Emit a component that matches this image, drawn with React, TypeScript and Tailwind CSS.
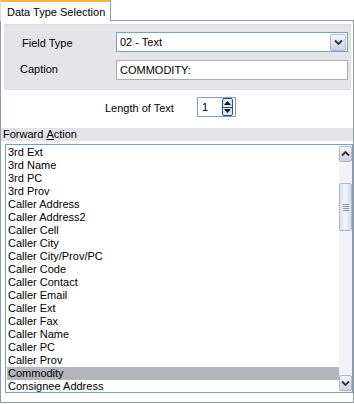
import React from 'react';

const items = [
  '3rd Ext',
  '3rd Name',
  '3rd PC',
  '3rd Prov',
  'Caller Address',
  'Caller Address2',
  'Caller Cell',
  'Caller City',
  'Caller City/Prov/PC',
  'Caller Code',
  'Caller Contact',
  'Caller Email',
  'Caller Ext',
  'Caller Fax',
  'Caller Name',
  'Caller PC',
  'Caller Prov',
  'Commodity',
  'Consignee Address',
];

const Chevron = ({ up = false }: { up?: boolean }) => (
  <svg width="9" height="6" viewBox="0 0 9 6" className={up ? 'rotate-180' : ''}>
    <path d="M1 1.5 L4.5 5 L8 1.5" fill="none" stroke="#333" strokeWidth="1.8" />
  </svg>
);

const ScrollButton = ({ up = false }: { up?: boolean }) => (
  <div className="flex h-[16px] w-[13px] items-center justify-center rounded-[2px] border border-[#b0b6cc] bg-gradient-to-b from-[#f6f7fc] to-[#cdd1e4]">
    <Chevron up={up} />
  </div>
);

const App = () => {
  return (
    <div className="h-[404px] w-[354px] overflow-hidden bg-white font-['Liberation_Sans',Arial,sans-serif] text-[11px] leading-[13px] text-black">
      {/* tab strip */}
      <div className="flex h-[21px]">
        <div className="flex w-[111px] flex-col border-l border-r border-[#919b9c] border-l-[#d8dde0]">
          <div className="h-[2px] bg-[#f7b23c]" />
          <div className="flex flex-1 items-center pl-[6px] pt-[1px]">Data Type Selection</div>
        </div>
        <div className="flex-1 border-b border-[#919b9c]" />
      </div>

      {/* panel */}
      <div className="flex h-[382px] flex-col border-b border-l border-r border-[#919b9c]">
        <div className="ml-[3px] mr-[2px] mt-[3px] flex h-[66px] flex-col gap-[8px] border border-dotted border-[#d6d6dc] bg-[#e4e4e9] pt-[7px]">
          <div className="flex h-[20px] items-center">
            <div className="w-[111px] pl-[17px] pt-[2px]">Field Type</div>
            <div className="flex h-[20px] w-[232px] items-center border border-[#7f9db9] bg-white">
              <div className="flex-1 pl-[3px]">02 - Text</div>
              <div className="mr-[1px] flex h-[17px] w-[16px] items-center justify-center rounded-[2px] border border-[#b0b6cc] bg-gradient-to-b from-[#f6f7fc] to-[#cdd1e4]">
                <Chevron />
              </div>
            </div>
          </div>
          <div className="flex h-[20px] items-center">
            <div className="w-[111px] pb-[2px] pl-[15px]">Caption</div>
            <div className="flex h-[20px] w-[232px] items-center border border-[#a5acb2] bg-white pl-[3px]">
              COMMODITY:
            </div>
          </div>
        </div>

        <div className="mt-[7px] flex h-[20px] items-center pl-[104px]">
          <div className="w-[92px] pt-[2px]">Length of Text</div>
          <div className="flex h-[20px] w-[39px] items-center border border-[#7f9db9] bg-white">
            <div className="flex-1 pl-[4px]">1</div>
            <div className="mr-[2px] flex h-[18px] w-[11px] flex-col rounded-[2px] border border-[#2c4f8c] bg-[#dfe6f4]">
              <div className="flex flex-1 items-center justify-center border-b border-[#2c4f8c]">
                <svg width="7" height="4" viewBox="0 0 7 4"><path d="M0 4 L3.5 0 L7 4 Z" fill="#111" /></svg>
              </div>
              <div className="flex flex-1 items-center justify-center">
                <svg width="7" height="4" viewBox="0 0 7 4"><path d="M0 0 L3.5 4 L7 0 Z" fill="#111" /></svg>
              </div>
            </div>
          </div>
        </div>

        <div className="mt-[11px] flex h-[13px] items-center bg-[#e3e3e8] pl-[2px]">
          Forward&nbsp;<span className="underline">A</span>ction
        </div>

        <div className="ml-[4px] mt-[3px] flex h-[249px] border border-[#7f9db9]">
          <ul className="flex-1 overflow-hidden pl-[1px] pt-[1px]">
            {items.map((item) => (
              <li
                key={item}
                className={`h-[13px] whitespace-nowrap pl-[1px] leading-[13px] ${
                  item === 'Commodity' ? 'bg-[#b5b5bd]' : ''
                }`}
              >
                {item}
              </li>
            ))}
          </ul>
          <div className="flex w-[13px] flex-col bg-[#f1f1f7] py-[1px]">
            <ScrollButton up />
            <div className="mt-[21px] flex h-[48px] w-[13px] flex-col items-center justify-center gap-[1px] rounded-[2px] border border-[#b0b6cc] bg-gradient-to-r from-[#dde0ee] via-[#f4f5fb] to-[#d4d8ea]">
              <div className="h-px w-[6px] bg-[#8c93b0]" />
              <div className="h-px w-[6px] bg-[#8c93b0]" />
              <div className="h-px w-[6px] bg-[#8c93b0]" />
              <div className="h-px w-[6px] bg-[#8c93b0]" />
            </div>
            <div className="flex-1" />
            <ScrollButton />
          </div>
        </div>
      </div>
    </div>
  );
};

export default App;
